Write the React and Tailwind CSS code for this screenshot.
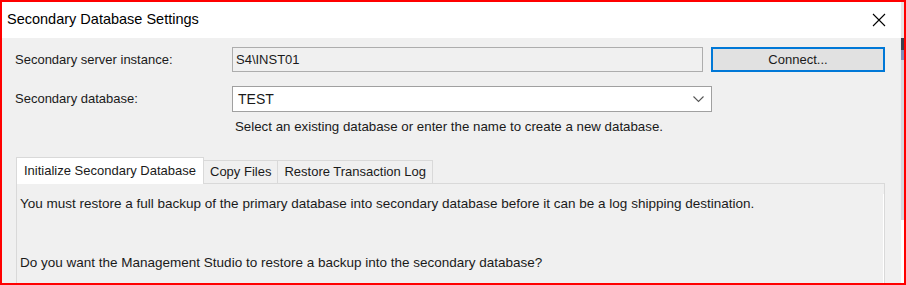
import React from "react";

const font = { fontFamily: '"Segoe UI", "Liberation Sans", Arial, sans-serif' };

const CloseIcon = () => (
  <svg width="14" height="14" viewBox="0 0 14 14" className="text-black">
    <path d="M1 1 L13 13 M13 1 L1 13" stroke="currentColor" strokeWidth="1.1" fill="none" />
  </svg>
);

const Chevron = () => (
  <svg width="11" height="7" viewBox="0 0 11 7">
    <path d="M0.5 0.5 L5.5 5.5 L10.5 0.5" stroke="#555" strokeWidth="1.1" fill="none" />
  </svg>
);

const tabs = ["Initialize Secondary Database", "Copy Files", "Restore Transaction Log"];

export default function App() {
  return (
    <div
      className="w-[906px] h-[285px] overflow-hidden border-2 border-[#ff0000] bg-[#f0f0f0] text-[#1a1a1a]"
      style={font}
    >
      <div className="flex h-full">
        <div className="flex-1 flex flex-col min-w-0 overflow-hidden">
          {/* Title bar */}
          <div className="shrink-0 h-[36px] bg-white flex items-center justify-between pl-[5px] pr-[15px]">
            <span className="text-[14.5px] text-black">Secondary Database Settings</span>
            <CloseIcon />
          </div>

          {/* Form */}
          <div className="shrink-0 pt-[9px] pl-[13px] pr-[13px]">
            <div className="flex items-center h-[25px]">
              <span className="w-[217px] text-[13px]">Secondary server instance:</span>
              <div className="w-[471px] h-[25px] border border-[#adadad] bg-[#f0f0f0] flex items-center px-[3px] text-[13px]">
                S4\INST01
              </div>
              <button className="ml-[8px] w-[174px] h-[25px] border-2 border-[#0078d7] bg-[#e1e1e1] text-[13px] flex items-center justify-center">
                Connect...
              </button>
            </div>

            <div className="flex items-center h-[26px] mt-[14px]">
              <span className="w-[217px] text-[13px]">Secondary database:</span>
              <div className="w-[480px] h-[26px] border border-[#a0a0a0] bg-white flex items-center justify-between pl-[5px] pr-[7px] text-[14px]">
                <span>TEST</span>
                <Chevron />
              </div>
            </div>

            <div className="pl-[220px] mt-[5px] text-[13.3px] leading-[19px]">
              Select an existing database or enter the name to create a new database.
            </div>

            {/* Tabs */}
            <div className="mt-[21px] pl-[1px] pr-[3px]">
              <div className="flex items-end h-[27px]">
                {tabs.map((t, i) => (
                  <div
                    key={t}
                    className={
                      i === 0
                        ? "h-[27px] px-[7px] bg-white border border-b-0 border-[#d9d9d9] flex items-center text-[13px] relative z-10"
                        : "h-[24px] px-[6px] bg-[#f0f0f0] border border-l-0 border-[#d9d9d9] flex items-center text-[13px]"
                    }
                  >
                    {t}
                  </div>
                ))}
              </div>
              <div className="-mt-[1px] h-[110px] border border-[#d9d9d9] bg-[#f0f0f0] pl-[3px] pt-[10px] text-[13.5px]">
                <div className="border-r border-white h-full">
                  <p>
                    You must restore a full backup of the primary database into secondary database before it can be a log shipping destination.
                  </p>
                  <p className="mt-[39px]">
                    Do you want the Management Studio to restore a backup into the secondary database?
                  </p>
                </div>
              </div>
            </div>
          </div>
        </div>

        {/* strip of the window behind */}
        <div className="w-[3px] shrink-0 flex flex-col">
          <div className="h-[36px] bg-[#e6e6e6]" />
          <div className="h-[12px] bg-[#3c4250]" />
          <div className="h-[10px] bg-[#7d8db8]" />
          <div className="h-[160px] bg-[#d4d8de]" />
          <div className="flex-1 bg-white" />
        </div>
      </div>
    </div>
  );
}
